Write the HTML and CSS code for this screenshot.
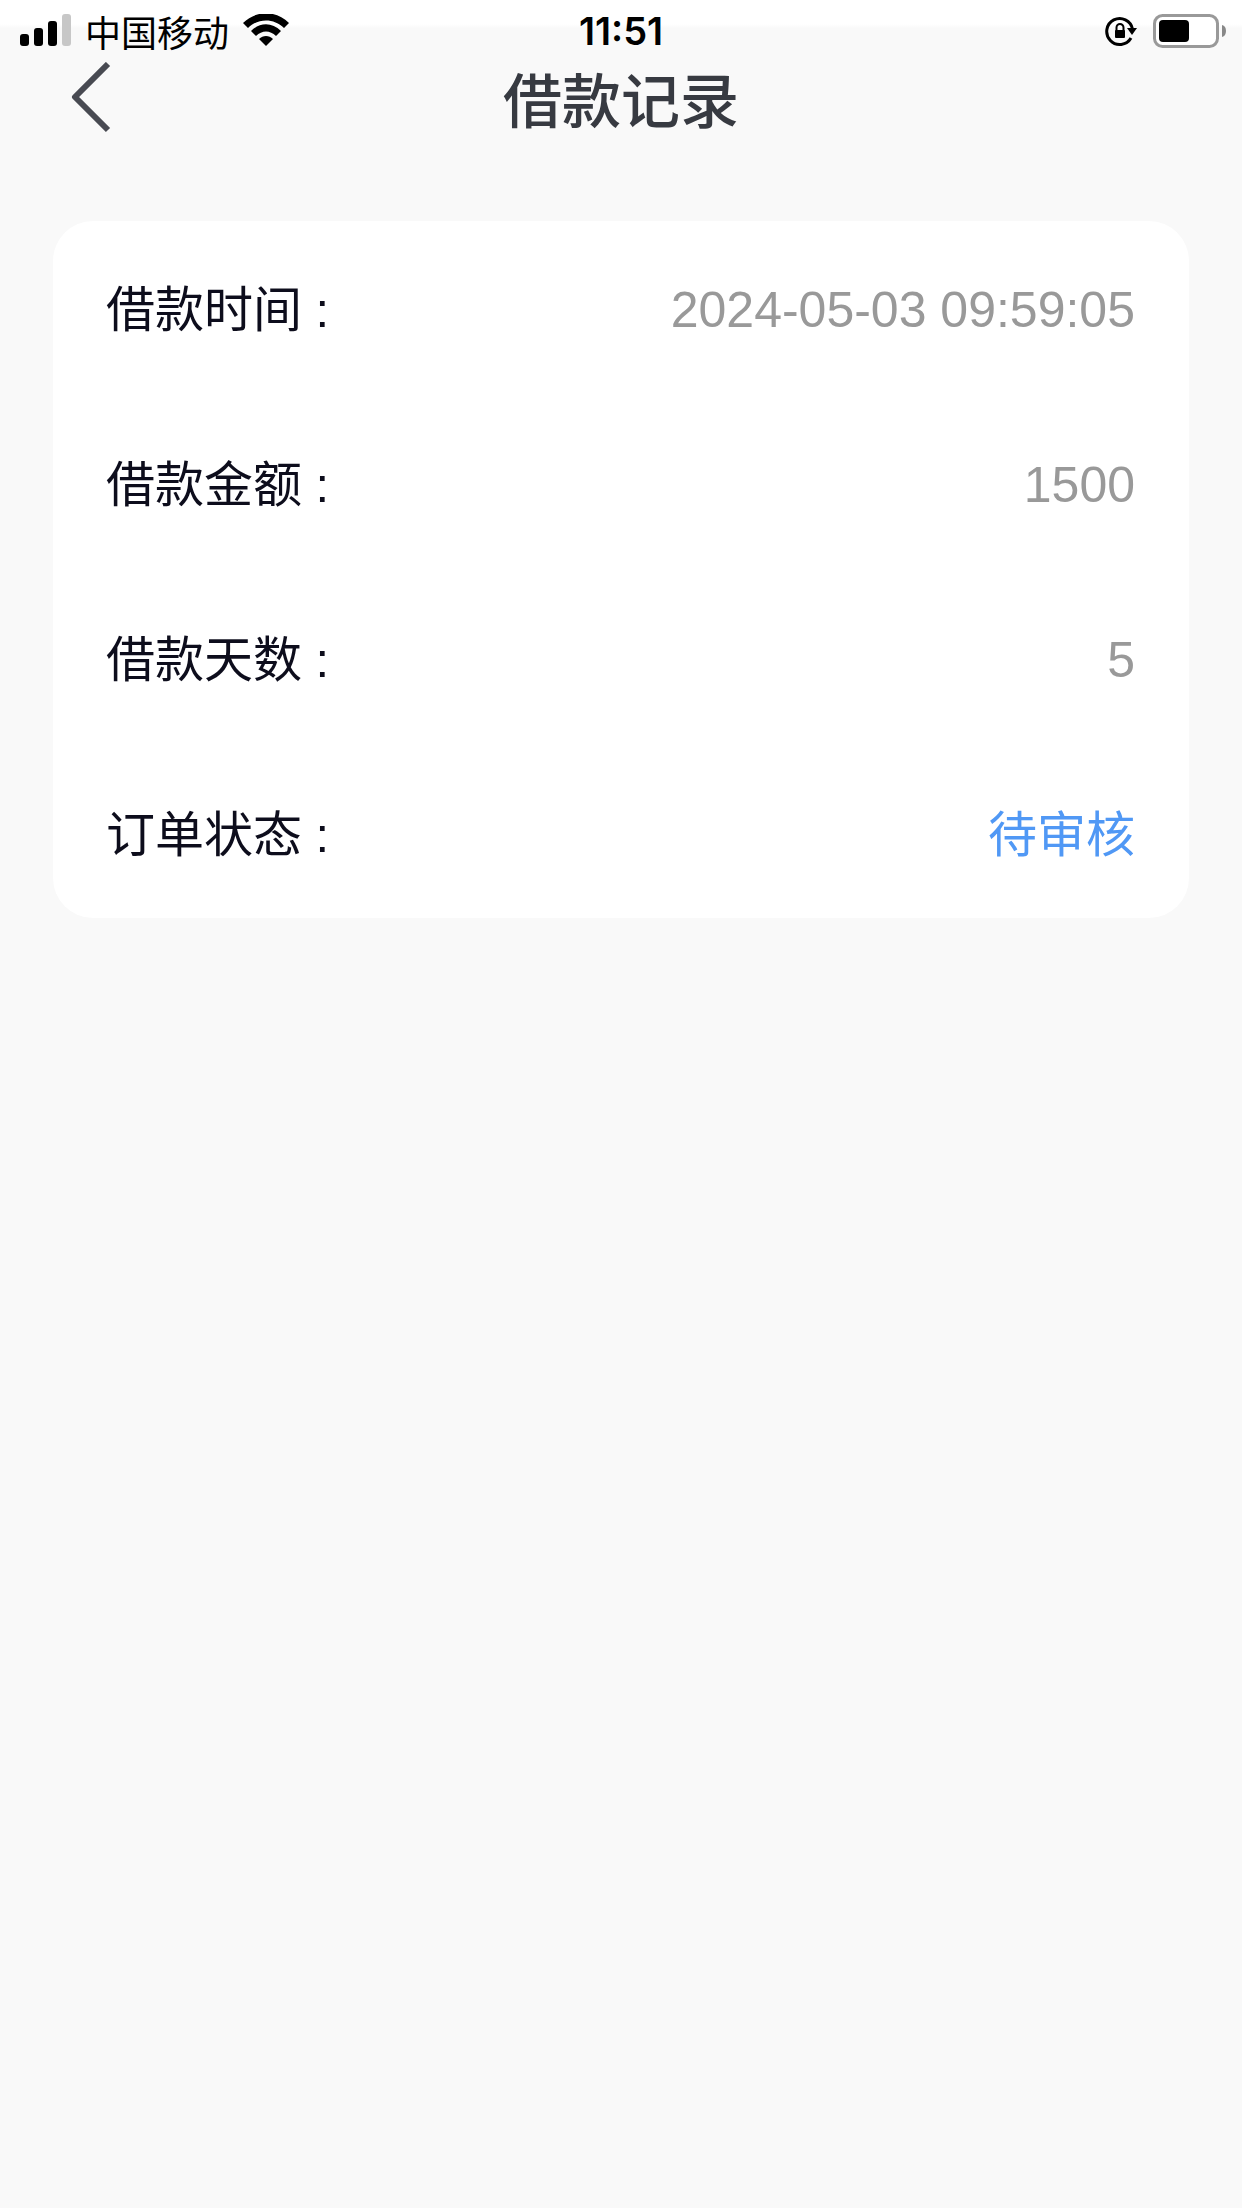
FILE: index.html
```html
<!DOCTYPE html>
<html lang="zh-CN">
<head>
<meta charset="utf-8">
<meta name="viewport" content="width=device-width, initial-scale=1">
<title>借款记录</title>
<link rel="stylesheet" href="styles.css">
</head>
<body>
<div class="status-bar">
  <div class="status-left">
    <svg class="signal" width="51" height="34" viewBox="0 0 51 34" aria-hidden="true">
      <rect x="0" y="20" width="9" height="12" rx="3"/>
      <rect x="14" y="14" width="9" height="18" rx="3"/>
      <rect x="28" y="7" width="9" height="25" rx="3"/>
      <rect x="42" y="0" width="9" height="32" rx="3" fill="#c7c7c7"/>
    </svg>
    <span class="carrier">中国移动</span>
    <svg class="wifi" width="46" height="34" viewBox="0 0 46 34" aria-hidden="true">
      <path d="M0 9C13-4 33-4 46 9L41 14C31 4 15 4 5 14Z"/>
      <path d="M8 17C17 8 29 8 38 17L33 22C27 16 19 16 13 22Z"/>
      <path d="M16 25C20 21 26 21 30 25L23 32Z"/>
    </svg>
  </div>
  <span class="clock">11:51</span>
  <div class="status-right">
    <svg class="lock" width="32" height="32" viewBox="0 0 32 32" aria-hidden="true">
      <path d="M26 23A13 13 0 1 1 27.500 14" fill="none" stroke="#000" stroke-width="3"/>
      <path d="M22 13H32L27 20Z"/>
      <rect x="10" y="15" width="10" height="8" rx="1"/>
      <path d="M11.500 16V12.500A3.500 3.500 0 0 1 18.500 12.500V16" fill="none" stroke="#000" stroke-width="2"/>
    </svg>
    <svg class="battery" width="73" height="34" viewBox="0 0 73 34" aria-hidden="true">
      <rect x="1.500" y="1.500" width="63" height="31" rx="8" fill="#fff" stroke="#999" stroke-width="3"/>
      <rect x="6" y="6" width="30" height="22" rx="4"/>
      <path d="M69 11Q73 12 73 17T69 23Z" fill="#888"/>
    </svg>
  </div>
</div>
<header class="nav">
  <button class="back" type="button" aria-label="返回">
    <svg width="40" height="72" viewBox="0 0 40 72" aria-hidden="true">
      <path d="M37 2L4 35L37 68" fill="none" stroke="#484a52" stroke-width="6" stroke-linejoin="round"/>
    </svg>
  </button>
  <h1 class="title">借款记录</h1>
</header>
<main class="content">
  <dl class="card">
    <div class="row"><dt>借款时间 :</dt><dd>2024-05-03 09:59:05</dd></div>
    <div class="row"><dt>借款金额 :</dt><dd>1500</dd></div>
    <div class="row"><dt>借款天数 :</dt><dd>5</dd></div>
    <div class="row"><dt>订单状态 :</dt><dd class="pending">待审核</dd></div>
  </dl>
</main>
</body>
</html>
```
FILE: styles.css
```css
* {
  box-sizing: border-box;
}

body {
  margin: 0;
  min-height: 100vh;
  background: #f9f9f9;
  font-family: "Liberation Sans", "Noto Sans CJK SC", sans-serif;
}

.status-bar {
  display: grid;
  grid-template-columns: 1fr auto 1fr;
  align-items: center;
  height: 62px;
  padding: 0 16px;
  background: linear-gradient(#fff 24px, #f9f9f9 28px);
  color: #000;
}

.status-left,
.status-right {
  display: flex;
  align-items: center;
}

.status-left {
  gap: 14px;
  padding-left: 4px;
}

.status-right {
  justify-content: flex-end;
  gap: 16px;
}

.carrier {
  font-family: "Noto Sans CJK SC", sans-serif;
  font-size: 36px;
  line-height: 58px;
}

.clock {
  font: 600 38px/62px Inter, sans-serif;
}

.nav {
  display: grid;
  grid-template-columns: 1fr auto 1fr;
  align-items: start;
  height: 76px;
  padding: 0 71px;
}

.back {
  justify-self: start;
  display: flex;
  padding: 0;
  border: 0;
  background: none;
}

.title {
  margin: 0;
  font-family: "Noto Sans CJK SC", sans-serif;
  font-size: 59px;
  font-weight: 500;
  line-height: 72px;
  color: #373a41;
}

.content {
  padding: 83px 53px;
}

.card {
  display: flex;
  flex-direction: column;
  gap: 85px;
  margin: 0;
  padding: 44px 54px 38px 53px;
  border-radius: 40px;
  background: #fff;
}

.row {
  display: flex;
  justify-content: space-between;
  font-size: 50px;
  line-height: 90px;
}

dt {
  font-size: 49px;
  color: #0d0d1c;
}

dd {
  margin: 0;
  color: #999;
}

.pending {
  font-size: 49px;
  color: #5098f5;
}
```
